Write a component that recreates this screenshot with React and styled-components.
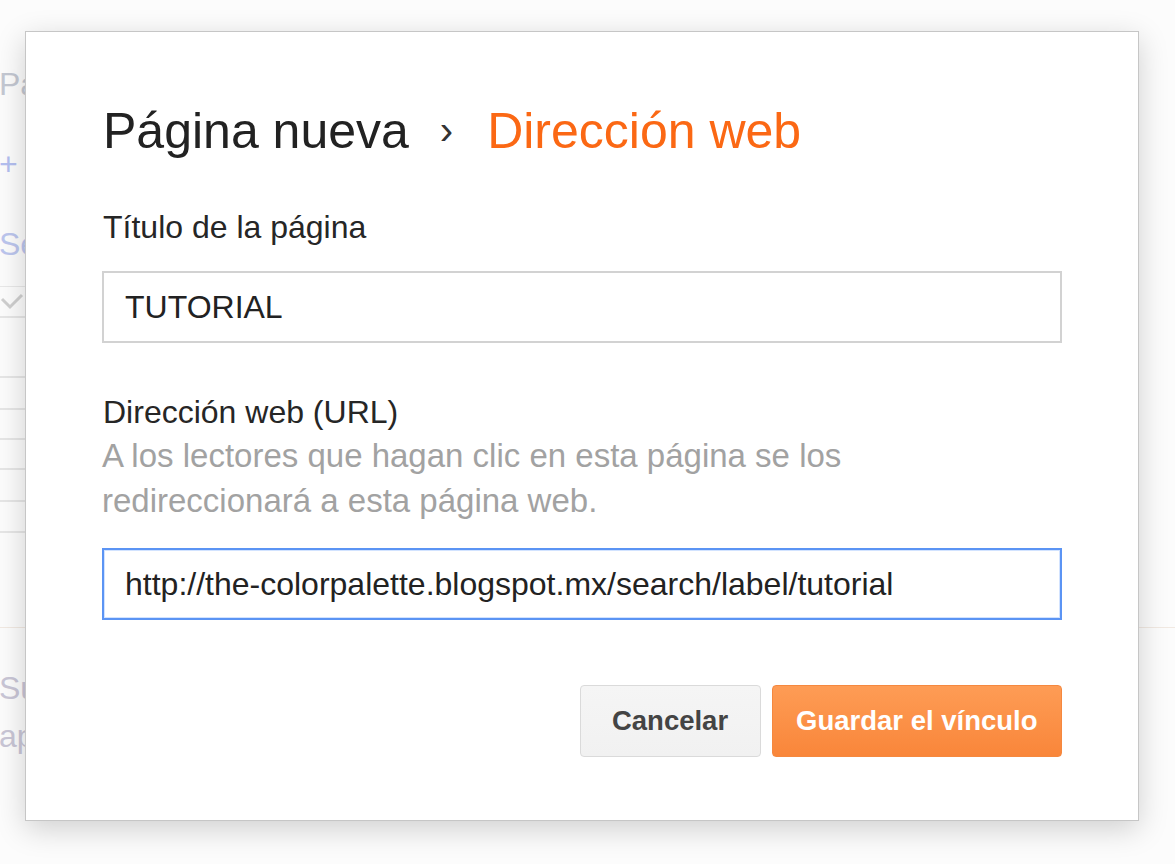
import styled, { createGlobalStyle } from "styled-components";

const Global = createGlobalStyle`
  html, body {
    margin: 0;
    padding: 0;
    background: #fcfcfc;
    font-family: "Liberation Sans", Arial, sans-serif;
  }
`;

const Screen = styled.div`
  position: relative;
  width: 1175px;
  height: 864px;
  overflow: hidden;
  background: #fcfcfc;
`;

/* faded page behind the dialog */
const Backdrop = styled.div`
  display: flex;
  flex-direction: column;
  padding-top: 64px;
  font-size: 32px;
  line-height: 40px;
`;

const FadedText = styled.div`
  color: ${(p) => p.color || "#c4c8d2"};
  margin-top: ${(p) => p.top || 0}px;
  margin-left: -1px;
  white-space: nowrap;
`;

const Table = styled.div`
  margin-top: 22px;
  border-top: 1px solid #e8e8e8;
  width: 300px;
`;

const Row = styled.div`
  height: ${(p) => p.h}px;
  border-bottom: 2px solid #e6e6e6;
  display: flex;
  align-items: center;
`;

const Divider = styled.div`
  margin-top: 94px;
  height: 1px;
  background: #f1e9e2;
  width: 100%;
`;

const Dialog = styled.div`
  position: absolute;
  left: 25px;
  top: 31px;
  width: 1114px;
  box-sizing: border-box;
  background: #fff;
  border: 1px solid #c6c6c6;
  box-shadow: 0 8px 28px rgba(0, 0, 0, 0.18);
  padding: 70px 76px 63px 76px;
  display: flex;
  flex-direction: column;
`;

const Title = styled.h1`
  margin: 0;
  font-weight: normal;
  font-size: 50px;
  line-height: 58px;
  color: #222;
  white-space: nowrap;
  padding-left: 1px;
`;

const Chevron = styled.span`
  color: #333;
  margin: 0 34px 0 31px;
  font-size: 40px;
  position: relative;
  top: -4px;
`;

const Crumb = styled.span`
  color: #fb6814;
`;

const Label = styled.div`
  margin-top: ${(p) => p.top}px;
  padding-left: 1px;
  font-size: 32px;
  line-height: 40px;
  color: #262626;
`;

const Hint = styled.div`
  font-size: 33px;
  line-height: 45px;
  color: #a2a2a2;
  max-width: 790px;
  margin-top: 1px;
`;

const Field = styled.div`
  margin-top: ${(p) => p.top}px;
  height: 72px;
  box-sizing: border-box;
  border: 2px solid ${(p) => (p.focused ? "#5b94f4" : "#d2d2d2")};
  ${(p) => p.focused && "box-shadow: inset 0 0 0 1px rgba(77,144,254,0.25);"}
  display: flex;
  align-items: center;
  padding: 0 21px;
  font-size: 32px;
  color: #222;
  white-space: nowrap;
  overflow: hidden;
`;

const Actions = styled.div`
  margin-top: 65px;
  display: flex;
  justify-content: flex-end;
  gap: 11px;
`;

const Button = styled.button`
  height: 72px;
  min-width: 181px;
  box-sizing: border-box;
  padding: 0 23.5px;
  border-radius: 4px;
  font-family: "Liberation Sans", Arial, sans-serif;
  font-weight: bold;
  font-size: 27.5px;
  cursor: pointer;
  border: 1px solid ${(p) => (p.primary ? "#f5883f" : "#dadada")};
  color: ${(p) => (p.primary ? "#fff" : "#444")};
  background: ${(p) =>
    p.primary
      ? "linear-gradient(#fe9c55, #f9863a)"
      : "linear-gradient(#f5f5f5, #f1f1f1)"};
`;

export default function App() {
  return (
    <Screen>
      <Global />
      <Backdrop>
        <FadedText>Páginas</FadedText>
        <FadedText top={40} color="#b4bff0">+</FadedText>
        <FadedText top={40} color="#bcc6ee">Se</FadedText>
        <Table>
          <Row h={29}>
            <svg width="30" height="22" viewBox="0 0 30 22">
              <path d="M2 8 L10 16 L22 4" fill="none" stroke="#cfcfcf" strokeWidth="3" />
            </svg>
          </Row>
          <Row h={58} />
          <Row h={30} />
          <Row h={28} />
          <Row h={28} />
          <Row h={30} />
          <Row h={29} />
        </Table>
        <Divider />
        <FadedText top={40} color="#c9c6d6">Su</FadedText>
        <FadedText top={8} color="#c9c6d6">ap</FadedText>
      </Backdrop>

      <Dialog>
        <Title>
          Página nueva<Chevron>›</Chevron>
          <Crumb>Dirección web</Crumb>
        </Title>

        <Label top={44}>Título de la página</Label>
        <Field top={24}>TUTORIAL</Field>

        <Label top={49}>Dirección web (URL)</Label>
        <Hint>
          A los lectores que hagan clic en esta página se los redireccionará a
          esta página web.
        </Hint>
        <Field top={25} focused>
          http://the-colorpalette.blogspot.mx/search/label/tutorial
        </Field>

        <Actions>
          <Button>Cancelar</Button>
          <Button primary>Guardar el vínculo</Button>
        </Actions>
      </Dialog>
    </Screen>
  );
}
